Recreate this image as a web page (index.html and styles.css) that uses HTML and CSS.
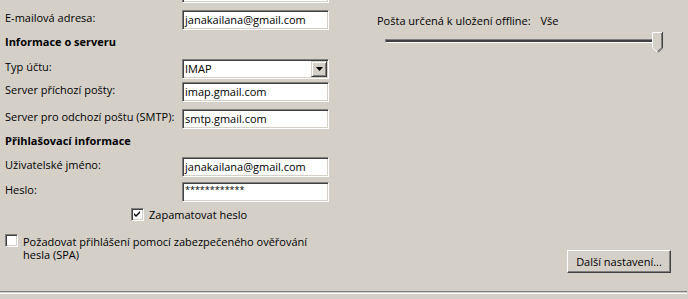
FILE: index.html
```html
<!DOCTYPE html>
<html lang="cs">
<head>
<meta charset="utf-8">
<title>Nastavení účtu</title>
<link rel="stylesheet" href="styles.css">
</head>
<body>
<div class="dialog">
  <div class="main">
    <div class="left">
      <div class="row row-first">
        <div class="label"></div>
        <div class="field"></div>
      </div>
      <div class="row row-email">
        <div class="label">E-mailová adresa:</div>
        <div class="field">janakailana@gmail.com</div>
      </div>
      <div class="heading heading-server">Informace o serveru</div>
      <div class="row row-type">
        <div class="label">Typ účtu:</div>
        <div class="field select">
          <span class="select-value">IMAP</span>
          <span class="select-btn">
            <svg width="7" height="4" viewBox="0 0 7 4"><path d="M0 0h7L3.5 4z" fill="#000"/></svg>
          </span>
        </div>
      </div>
      <div class="row row-in">
        <div class="label">Server příchozí pošty:</div>
        <div class="field">imap.gmail.com</div>
      </div>
      <div class="row row-out">
        <div class="label">Server pro odchozí poštu (SMTP):</div>
        <div class="field">smtp.gmail.com</div>
      </div>
      <div class="heading heading-login">Přihlašovací informace</div>
      <div class="row row-user">
        <div class="label">Uživatelské jméno:</div>
        <div class="field">janakailana@gmail.com</div>
      </div>
      <div class="row row-pass">
        <div class="label">Heslo:</div>
        <div class="field field-pass">************</div>
      </div>
      <div class="check check-remember">
        <span class="box">
          <svg width="13" height="13" viewBox="0 0 13 13"><path d="M3 5l2 2 4-4v2l-4 4-2-2z" fill="#000"/></svg>
        </span>
        <span class="check-text">Zapamatovat heslo</span>
      </div>
      <div class="check check-spa">
        <span class="box"></span>
        <span class="check-text">Požadovat přihlášení pomocí zabezpečeného ověřování hesla (SPA)</span>
      </div>
    </div>
    <div class="right">
      <div class="offline">
        <span>Pošta určená k uložení offline:</span>
        <span class="offline-value">Vše</span>
      </div>
      <div class="track">
        <svg class="thumb" width="11" height="21" viewBox="0 0 11 21">
          <path d="M0 0H11V16L5.5 21L0 16Z" fill="#d4d0c8"/>
          <path d="M0.5 15.5V0.5H10" fill="none" stroke="#fff" stroke-width="1"/>
          <path d="M0.5 15.8L5.5 20.3" fill="none" stroke="#fff" stroke-width="1"/>
          <path d="M10.5 0V16L6 20.5" fill="none" stroke="#404040" stroke-width="1"/>
          <path d="M9.5 1V15.6L5.5 19.4" fill="none" stroke="#808080" stroke-width="1"/>
        </svg>
      </div>
      <button class="btn" type="button">Další nastavení...</button>
    </div>
  </div>
  <div class="separator"></div>
</div>
</body>
</html>
```

FILE: styles.css
```css
html, body {
  margin: 0;
  padding: 0;
  background: #d4d0c8;
}

body {
  width: 688px;
  height: 299px;
  overflow: hidden;
  font-family: "Open Sans", "Noto Sans", "Liberation Sans", sans-serif;
  font-size: 11px;
  line-height: 16px;
  color: #000;
}

.dialog {
  display: flex;
  flex-direction: column;
  height: 299px;
}

.main {
  display: flex;
  height: 291px;
  overflow: hidden;
}

.left {
  width: 345px;
  padding-left: 5px;
  box-sizing: border-box;
  display: flex;
  flex-direction: column;
}

.row {
  display: flex;
  align-items: flex-start;
  height: 20px;
  flex-shrink: 0;
}

.row-first { margin-top: -17px; }
.row-email { margin-top: 7px; }
.row-type { margin-top: 9px; }
.row-in { margin-top: 3px; }
.row-out { margin-top: 7px; }
.row-user { margin-top: 8px; }
.row-pass { margin-top: 5px; }

.label {
  width: 177px;
  flex-shrink: 0;
  white-space: nowrap;
}

.field {
  width: 147px;
  height: 20px;
  box-sizing: border-box;
  background: #fff;
  border: 1px solid;
  border-color: #808080 #fff #fff #808080;
  box-shadow: inset 1px 1px #404040, inset -1px -1px #d4d0c8;
  padding-left: 2px;
  line-height: 18px;
  white-space: nowrap;
  overflow: hidden;
}

.field-pass {
  font-size: 9px;
  line-height: 14px;
}

.select {
  display: flex;
  justify-content: space-between;
  align-items: stretch;
  padding: 1px 1px 1px 2px;
  line-height: 16px;
}

.select-btn {
  width: 16px;
  box-sizing: border-box;
  background: #d4d0c8;
  border: 1px solid;
  border-color: #d4d0c8 #404040 #404040 #d4d0c8;
  box-shadow: inset 1px 1px #fff, inset -1px -1px #808080;
  display: flex;
  align-items: center;
  justify-content: center;
}

.heading {
  font-weight: 700;
  flex-shrink: 0;
}

.heading-server { margin-top: 4px; }
.heading-login { margin-top: 4px; }

.check {
  display: flex;
  align-items: flex-start;
  flex-shrink: 0;
}

.box {
  width: 13px;
  height: 13px;
  box-sizing: border-box;
  background: #fff;
  border: 1px solid;
  border-color: #808080 #fff #fff #808080;
  box-shadow: inset 1px 1px #404040, inset -1px -1px #d4d0c8;
  flex-shrink: 0;
  position: relative;
}

.box svg {
  position: absolute;
  left: -1px;
  top: -1px;
}

.check-text {
  margin-left: 5px;
}

.check-remember {
  margin-top: 5px;
  margin-left: 126px;
}

.check-remember .box {
  margin-top: 1px;
}

.check-spa {
  margin-top: 12px;
  width: 320px;
}

.check-spa .box {
  margin-top: -1px;
}

.check-spa .check-text {
  line-height: 13px;
}

.right {
  flex: 1;
  display: flex;
  flex-direction: column;
  padding-left: 32px;
}

.offline {
  margin-top: 13px;
  white-space: nowrap;
}

.offline-value {
  margin-left: 7px;
}

.track {
  position: relative;
  margin-top: 10px;
  margin-left: 8px;
  width: 275px;
  height: 4px;
  box-sizing: border-box;
  border: 1px solid;
  border-color: #808080 #fff #fff #808080;
  background: #404040;
}

.thumb {
  position: absolute;
  left: 266px;
  top: -8px;
}

.btn {
  margin-top: auto;
  margin-bottom: 18px;
  margin-right: 17px;
  align-self: flex-end;
  width: 104px;
  height: 23px;
  box-sizing: border-box;
  font: inherit;
  color: #000;
  background: #d4d0c8;
  border: 1px solid;
  border-color: #fff #404040 #404040 #fff;
  box-shadow: inset -1px -1px #808080;
  padding: 0;
  line-height: 20px;
}

.separator {
  height: 1px;
  border-top: 1px solid #808080;
  border-bottom: 1px solid #fff;
  background: #d4d0c8;
  width: 687px;
}
```
